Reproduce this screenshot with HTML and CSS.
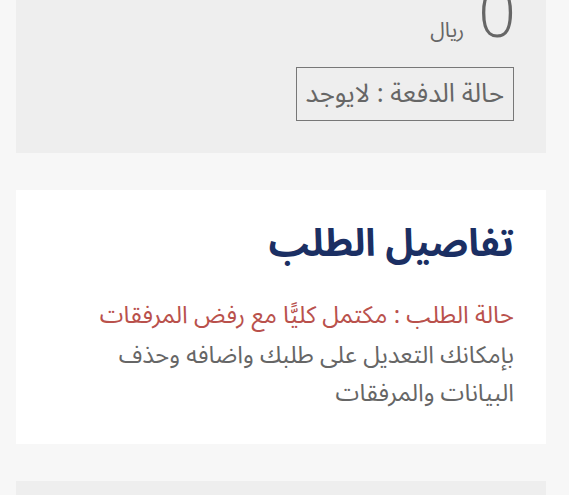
FILE: index.html
```html
<!DOCTYPE html>
<html lang="ar" dir="rtl">
<head>
<meta charset="utf-8">
<link rel="stylesheet" href="styles.css">
</head>
<body>
<div class="page">
  <section class="card card-grey card-payment">
    <div class="amount">
      <span class="amount-value">0</span>
      <span class="amount-currency">ريال</span>
    </div>
    <div class="pay-status">حالة الدفعة : لايوجد</div>
  </section>
  <section class="card card-white">
    <h2 class="title">تفاصيل الطلب</h2>
    <p class="status">حالة الطلب : مكتمل كليًّا مع رفض المرفقات</p>
    <p class="desc">بإمكانك التعديل على طلبك واضافه وحذف البيانات والمرفقات</p>
  </section>
  <section class="card card-grey card-next"></section>
</div>
</body>
</html>
```
FILE: styles.css
```css
html, body {
  margin: 0;
  padding: 0;
  background: #f7f7f7;
  height: 100%;
  overflow: hidden;
}
body {
  font-family: "Noto Sans Arabic", "DejaVu Sans", sans-serif;
  color: #666;
}
.page {
  padding: 0 23px 0 16px;
  margin-top: -22px;
  display: flex;
  flex-direction: column;
  gap: 37px;
}
.card {
  padding: 0 32px;
}
.card-grey {
  background: #eeeeee;
}
.card-payment {
  display: flex;
  flex-direction: column;
  align-items: flex-start;
  padding-top: 0;
  padding-bottom: 32px;
}
.card-white {
  background: #ffffff;
  padding-top: 30px;
  padding-bottom: 31px;
}
.amount {
  display: flex;
  align-items: baseline;
  gap: 14px;
}
.amount-value {
  font-family: "Open Sans", sans-serif;
  font-weight: 300;
  font-size: 66px;
  line-height: 1;
  color: #666;
  margin-right: -2px;
}
.amount-currency {
  font-size: 21px;
  color: #666;
}
.pay-status {
  margin-top: 15px;
  border: 1.5px solid #777;
  padding: 9px 9px;
  font-size: 26px;
  line-height: 34px;
  color: #666;
}
.title {
  margin: 0;
  font-size: 38px;
  font-weight: bold;
  color: #1b2f63;
  line-height: 1.3;
}
.status {
  margin: 28px 0 0;
  font-size: 24px;
  line-height: 38px;
  color: #b9514c;
}
.desc {
  margin: 2px 0 0;
  font-size: 24px;
  line-height: 38px;
  color: #666;
}
.card-next {
  height: 60px;
}
```
